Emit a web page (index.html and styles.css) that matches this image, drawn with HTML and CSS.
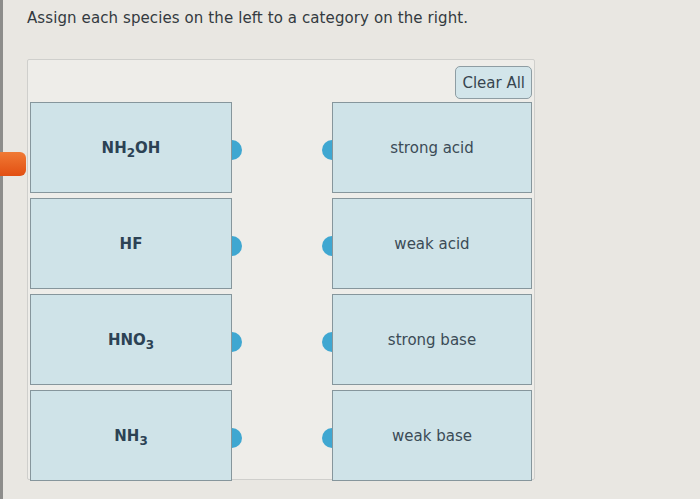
FILE: index.html
```html
<!DOCTYPE html>
<html lang="en">
<head>
    <meta charset="UTF-8">
    <meta name="viewport" content="width=device-width, initial-scale=1.0">
    <title>Assign species</title>
    <link rel="stylesheet" href="styles.css">
</head>
<body>
    <div class="page">
        <p class="prompt">Assign each species on the left to a category on the right.</p>

        <div class="board">
            <div class="handle"></div>
            <div class="toolbar">
                <button class="clear-btn">Clear All</button>
            </div>

            <div class="columns">
                <div class="column left">
                    <div class="card species"><span>NH<sub>2</sub>OH</span><i class="dot dot-right"></i></div>
                    <div class="card species"><span>HF</span><i class="dot dot-right"></i></div>
                    <div class="card species"><span>HNO<sub>3</sub></span><i class="dot dot-right"></i></div>
                    <div class="card species"><span>NH<sub>3</sub></span><i class="dot dot-right"></i></div>
                </div>
                <div class="column right">
                    <div class="card category"><i class="dot dot-left"></i><span>strong acid</span></div>
                    <div class="card category"><i class="dot dot-left"></i><span>weak acid</span></div>
                    <div class="card category"><i class="dot dot-left"></i><span>strong base</span></div>
                    <div class="card category"><i class="dot dot-left"></i><span>weak base</span></div>
                </div>
            </div>
        </div>
    </div>
</body>
</html>
```

FILE: styles.css
```css
html, body { margin: 0; padding: 0; }
body { background: #e9e7e2; font-family: "DejaVu Sans", Verdana, sans-serif; color: #2f3f4c; }
.page { width: 700px; height: 499px; border-left: 3px solid #8d8d8b; box-sizing: border-box; padding: 9px 0 0 24px; }
.prompt { margin: 0; font-size: 15px; line-height: 18px; letter-spacing: 0.1px; color: #333a40; }

.board { position: relative; margin-top: 32px; width: 508px; height: 421px; border: 1px solid #cfcfcc; border-radius: 2px; background: #eeede9; box-sizing: border-box; padding: 6px 2px 0 2px; }
.handle { position: absolute; left: -30px; top: 92px; width: 28px; height: 24px; border-radius: 0 6px 6px 0; background: linear-gradient(#f07a35, #e24f12); }

.toolbar { display: flex; justify-content: flex-end; height: 34px; }
.clear-btn { font-family: inherit; font-size: 15px; color: #38454f; background: #d2e5ea; border: 1px solid #8e9da3; border-radius: 5px; padding: 0 6px; height: 33px; }

.columns { display: flex; justify-content: space-between; margin-top: 2px; }
.column { display: flex; flex-direction: column; gap: 5px; }
.left { width: 202px; }
.right { width: 200px; }
.card { position: relative; height: 91px; background: #cfe3e8; border: 1px solid #86969c; box-sizing: border-box; display: flex; align-items: center; justify-content: center; }
.species span { font-weight: bold; font-size: 15px; color: #2c4254; }
.category span { font-size: 15px; color: #3b4b56; }
sub { font-size: 12px; vertical-align: -4px; line-height: 0; }

.dot { position: absolute; top: 37px; width: 10px; height: 20px; background: #3fa7d1; }
.dot-right { right: -11px; border-radius: 0 10px 10px 0; }
.dot-left { left: -11px; border-radius: 10px 0 0 10px; }
```
